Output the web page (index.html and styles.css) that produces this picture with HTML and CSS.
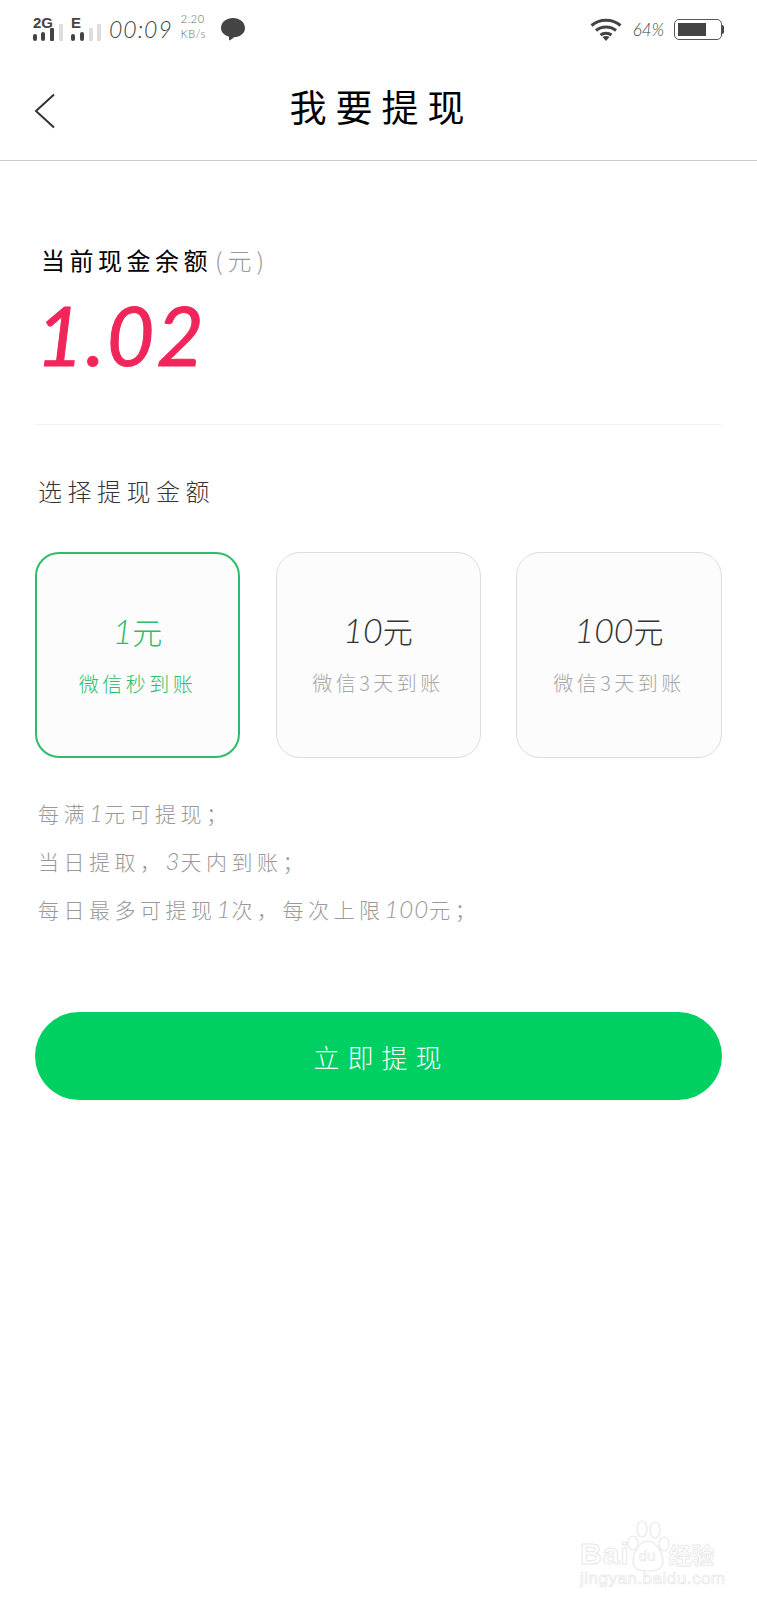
FILE: index.html
```html
<!DOCTYPE html>
<html lang="zh-CN">
<head>
    <meta charset="UTF-8">
    <meta name="viewport" content="width=device-width, initial-scale=1.0">
    <title>我要提现</title>
    <link rel="stylesheet" href="styles.css">
</head>
<body>
    <div class="status">
        <svg class="signal" width="70" height="34" viewBox="0 -6 70 34">
            <text x="0" y="12" class="net">2G</text>
            <text x="38" y="12" class="net">E</text>
            <rect x="0" y="18" width="4" height="7" rx="2" fill="#444"/>
            <rect x="8" y="16" width="4" height="9" rx="2" fill="#444"/>
            <rect x="17" y="12" width="4" height="13" rx="1" fill="#444"/>
            <rect x="26" y="8" width="4" height="17" rx="1" fill="#ddd"/>
            <rect x="38" y="18" width="4" height="7" rx="2" fill="#444"/>
            <rect x="47" y="16" width="4" height="9" rx="2" fill="#444"/>
            <rect x="56" y="12" width="4" height="13" rx="1" fill="#ddd"/>
            <rect x="64" y="8" width="4" height="17" rx="1" fill="#ddd"/>
        </svg>
        <span class="clock">00:09</span>
        <span class="speed">2.20<br>KB/s</span>
        <svg class="bubble" width="24" height="23" viewBox="0 0 24 23">
            <path d="M12 0C18.600 0 24 4.300 24 10C24 15.500 19 19 13 19.200C11.500 20.500 9.500 22 8 22.500C8 21.500 8.200 19.500 7.800 18.500C3 17.300 0 14 0 10C0 4.300 5.400 0 12 0Z" fill="#444"/>
        </svg>
        <span class="spacer"></span>
        <svg class="wifi" width="32" height="23" viewBox="0 0 32 23">
            <path d="M1.500 7.500C9.500 0.500 22.500 0.500 30.500 7.500" fill="none" stroke="#444" stroke-width="3"/>
            <path d="M6 12.500C11.500 7.700 20.500 7.700 26 12.500" fill="none" stroke="#444" stroke-width="3"/>
            <path d="M10.500 17C13.500 14.500 18.500 14.500 21.500 17" fill="none" stroke="#444" stroke-width="3"/>
            <path d="M12.500 19L16 23L19.500 19C17.500 17.800 14.500 17.800 12.500 19Z" fill="#444"/>
        </svg>
        <span class="pct">64%</span>
        <div class="battery">
            <div class="battery-level"></div>
        </div>
        <span class="battery-nub"></span>
    </div>

    <header class="topbar">
        <svg class="back" width="22" height="36" viewBox="0 0 22 36">
            <path d="M20 1.500L2 18L20 34.500" fill="none" stroke="#333" stroke-width="2"/>
        </svg>
        <h1 class="title">我要提现</h1>
    </header>

    <div class="main">
        <div class="balance-label">当前现金余额<span class="unit">(元)</span></div>
        <div class="balance">1.02</div>
        <div class="divider"></div>

        <div class="choose">选择提现金额</div>
        <div class="cards">
            <div class="card active">
                <div class="card-amount"><i>1</i>元</div>
                <div class="card-sub">微信秒到账</div>
            </div>
            <div class="card">
                <div class="card-amount"><i>10</i>元</div>
                <div class="card-sub">微信3天到账</div>
            </div>
            <div class="card">
                <div class="card-amount"><i>100</i>元</div>
                <div class="card-sub">微信3天到账</div>
            </div>
        </div>

        <div class="notes">
            <p>每满<i>1</i>元可提现；</p>
            <p>当日提取，<i>3</i>天内到账；</p>
            <p>每日最多可提现<i>1</i>次，每次上限<i>100</i>元；</p>
        </div>

        <button class="submit">立即提现</button>
    </div>

    <div class="watermark">
        <svg class="paw" width="44" height="58" viewBox="0 0 44 58">
            <g fill="#fff" stroke="#e8e8e8" stroke-width="1.200">
                <ellipse cx="7" cy="24" rx="5" ry="7"/>
                <ellipse cx="16" cy="10" rx="5" ry="8"/>
                <ellipse cx="29" cy="11" rx="5" ry="8"/>
                <ellipse cx="38" cy="25" rx="5" ry="7"/>
                <path d="M22 22C30 22 37 34 37 42C37 50 31 52 22 52C13 52 7 50 7 42C7 34 14 22 22 22Z"/>
            </g>
        </svg>
        <div class="wm-line">
            <span class="wm-bai">Bai</span><span class="wm-du">du</span><span class="wm-jy">经验</span>
        </div>
        <div class="wm-url">jingyan.baidu.com</div>
    </div>
</body>
</html>
```

FILE: styles.css
```css
*{
    box-sizing: border-box;
}
body{
    margin: 0;
    width: 757px;
    height: 1600px;
    position: relative;
    overflow: hidden;
    background-color: #fff;
    font-family: "Noto Sans CJK SC", "Noto Sans", sans-serif;
    font-weight: 300;
}
i{
    font-family: "Lato", "Roboto", sans-serif;
    font-weight: 300;
    font-style: italic;
}

/* status bar */
.status{
    height: 57px;
    padding: 16px 33px 0;
    display: flex;
    align-items: flex-start;
    color: #444;
}
.signal{
    margin-top: -6px;
}
.net{
    font-family: "Liberation Sans", sans-serif;
    font-size: 15px;
    font-weight: 700;
    fill: #444;
}
.clock{
    margin-left: 6px;
    font-family: "Lato", sans-serif;
    font-style: italic;
    font-size: 23px;
    font-weight: 300;
    letter-spacing: 1px;
    line-height: 26px;
}
.speed{
    margin-left: 8px;
    margin-top: -5px;
    font-family: "Lato", sans-serif;
    font-size: 11px;
    line-height: 15px;
    letter-spacing: 0.500px;
    color: #666;
}
.bubble{
    margin-left: 15px;
    margin-top: 2px;
}
.spacer{
    flex: 1;
}
.wifi{
    margin-top: 2px;
}
.pct{
    margin-left: 11px;
    font-family: "Lato", sans-serif;
    font-style: italic;
    font-size: 17px;
    font-weight: 300;
    line-height: 27px;
}
.battery{
    margin-left: 10px;
    margin-top: 3px;
    width: 48px;
    height: 21px;
    padding: 3px;
    border: 1.500px solid #555;
    border-radius: 5px;
}
.battery-level{
    width: 28px;
    height: 100%;
    background-color: #444;
}
.battery-nub{
    margin-top: 9px;
    width: 2px;
    height: 9px;
    background-color: #444;
    border-radius: 0 2px 2px 0;
}

/* title */
.topbar{
    height: 104px;
    border-bottom: 1px solid #ccc;
    display: flex;
    align-items: center;
    justify-content: center;
    position: relative;
}
.back{
    position: absolute;
    left: 34px;
    top: 36px;
}
.title{
    margin: 0 0 5px 6px;
    font-size: 37px;
    font-weight: 400;
    letter-spacing: 9px;
    color: #000;
}

/* content */
.main{
    padding: 84px 35px 0;
}
.balance-label{
    padding-left: 6px;
    height: 30px;
    font-size: 24px;
    line-height: 30px;
    letter-spacing: 4.500px;
    color: #000;
    font-weight: 400;
}
.unit{
    margin-left: 3px;
    letter-spacing: 5px;
    color: #999;
    font-weight: 300;
}
.balance{
    height: 101px;
    margin-top: 8px;
    padding-left: 1px;
    font-family: "Lato", sans-serif;
    font-style: italic;
    font-weight: 400;
    font-size: 82px;
    line-height: 102px;
    letter-spacing: 2px;
    color: #f0265a;
    -webkit-text-stroke: 1px #f0265a;
}
.divider{
    margin-top: 40px;
    height: 1px;
    background-color: #f2f2f2;
}
.choose{
    margin-top: 51px;
    padding-left: 3px;
    height: 30px;
    font-size: 24px;
    line-height: 30px;
    letter-spacing: 5.500px;
    color: #333;
}
.cards{
    margin-top: 46px;
    display: grid;
    grid-template-columns: 205px 205px 206px;
    justify-content: space-between;
}
.card{
    height: 206px;
    padding-top: 57px;
    border: 1px solid #ddd;
    border-radius: 24px;
    background-color: #fcfcfc;
    text-align: center;
    color: #333;
}
.card.active{
    border: 2px solid #2dbd6a;
    color: #2dbd6a;
}
.card-amount{
    height: 40px;
    font-size: 30px;
    line-height: 40px;
}
.card-amount i{
    font-size: 34px;
}
.card-sub{
    margin-top: 19px;
    font-size: 20px;
    line-height: 28px;
    letter-spacing: 3.500px;
    color: #a6a6a6;
}
.card.active .card-sub{
    color: #2dbd6a;
}
.notes{
    margin-top: 31px;
    padding-left: 3px;
    color: #999;
    font-size: 21px;
    letter-spacing: 4.500px;
}
.notes p{
    margin: 0;
    height: 48px;
    line-height: 48px;
}
.notes i{
    font-size: 24px;
    letter-spacing: 1px;
}
.submit{
    display: block;
    width: 100%;
    height: 88px;
    margin-top: 79px;
    padding-left: 12px;
    border: 0;
    border-radius: 44px;
    background-color: #00cf61;
    color: #fff;
    font-family: "Noto Sans CJK SC", sans-serif;
    font-weight: 300;
    font-size: 26px;
    letter-spacing: 8px;
}

/* baidu watermark, lies over the page corner */
.watermark{
    position: absolute;
    left: 580px;
    top: 1519px;
    width: 140px;
    height: 70px;
}
.paw{
    position: absolute;
    left: 46px;
    top: 0;
}
.wm-line{
    position: absolute;
    left: 0;
    top: 18px;
    display: flex;
    align-items: baseline;
    font-family: "Liberation Sans", sans-serif;
    color: #fff;
    -webkit-text-stroke: 1px #e8e8e8;
}
.wm-bai{
    font-size: 30px;
    font-weight: 700;
    letter-spacing: 1px;
}
.wm-du{
    margin-left: 9px;
    font-size: 15px;
    -webkit-text-stroke: 0.600px #e8e8e8;
    position: relative;
    top: -3px;
}
.wm-jy{
    margin-left: 13px;
    font-family: "Noto Sans CJK SC", sans-serif;
    font-size: 23px;
    font-weight: 700;
    -webkit-text-stroke: 0.800px #e8e8e8;
}
.wm-url{
    position: absolute;
    left: 0;
    top: 50px;
    font-family: "Liberation Sans", sans-serif;
    font-size: 17px;
    letter-spacing: 0.500px;
    color: #fff;
    -webkit-text-stroke: 0.700px #e8e8e8;
    white-space: nowrap;
}
```
